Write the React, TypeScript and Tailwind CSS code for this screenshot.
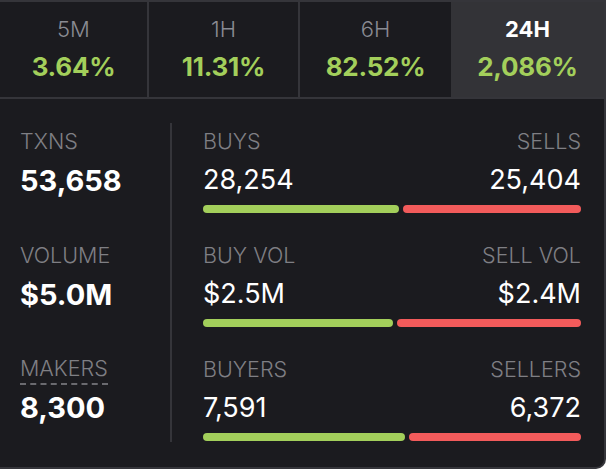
const tabs = [
  { label: "5M", value: "3.64%" },
  { label: "1H", value: "11.31%" },
  { label: "6H", value: "82.52%" },
  { label: "24H", value: "2,086%", active: true },
];

const totals = [
  { label: "TXNS", value: "53,658" },
  { label: "VOLUME", value: "$5.0M" },
  { label: "MAKERS", value: "8,300", dashed: true },
];

const splits = [
  { left: "BUYS", right: "SELLS", leftValue: "28,254", rightValue: "25,404", buy: 28254, sell: 25404 },
  { left: "BUY VOL", right: "SELL VOL", leftValue: "$2.5M", rightValue: "$2.4M", buy: 2.5, sell: 2.4 },
  { left: "BUYERS", right: "SELLERS", leftValue: "7,591", rightValue: "6,372", buy: 7591, sell: 6372 },
];

export default function App() {
  return (
    <div className="flex h-[469px] w-[606px] flex-col overflow-hidden rounded-br-[10px] border-y-2 border-r-2 border-[#35353a] bg-[#1b1b1f] font-['Inter','Liberation_Sans',sans-serif]">
      <div className="grid h-[97px] grid-cols-[149px_151px_151px_1fr] border-b-2 border-[#35353a]">
        {tabs.map((tab, i) => (
          <div
            key={tab.label}
            className={`flex flex-col items-center pt-[11px] ${i < 2 ? "border-r-2 border-[#35353a]" : ""} ${tab.active ? "bg-[#333337]" : ""}`}
          >
            <p
              className={`text-[22px] leading-[32px] ${tab.active ? "font-bold text-white" : "font-light text-[#8a8b93]"}`}
            >
              {tab.label}
            </p>
            <p className="mt-[6px] text-[26px] font-bold leading-[32px] tracking-[-0.01em] text-[#a3cf5b]">
              {tab.value}
            </p>
          </div>
        ))}
      </div>

      <div className="flex pl-5 pt-6">
        <div className="mt-[2px] flex w-[150px] flex-col gap-[42px]">
          {totals.map((item) => (
            <div key={item.label} className="flex flex-col items-start">
              <p
                className={`text-[21.5px] font-light text-[#7f7f84] ${item.dashed ? "h-[32px] border-b-2 border-dashed border-[#6a6a6f] leading-[30px]" : "leading-[32px]"}`}
              >
                {item.label}
              </p>
              <p className={`${item.dashed ? "mt-[7px]" : "mt-2"} text-[29px] font-bold leading-[32px] text-white`}>
                {item.value}
              </p>
            </div>
          ))}
        </div>

        <div className="h-[319px] w-[2px] bg-[#35353a]" />

        <div className="mt-[2px] box-content flex w-[378px] flex-col gap-[26px] pl-[31px]">
          {splits.map((row) => {
            const buyShare = row.buy / (row.buy + row.sell);
            return (
              <div key={row.left} className="flex flex-col">
                <div className="flex justify-between text-[21.5px] font-light leading-[32px] text-[#7f7f84]">
                  <span>{row.left}</span>
                  <span>{row.right}</span>
                </div>
                <div className="mt-[7px] flex justify-between text-[27px] font-normal leading-[32px] text-white">
                  <span>{row.leftValue}</span>
                  <span>{row.rightValue}</span>
                </div>
                <div className="mt-[9px] flex h-2 gap-1">
                  <div
                    className="rounded-full bg-[#a3cf5b]"
                    style={{ width: `calc((100% - 6px) * ${buyShare})` }}
                  />
                  <div className="flex-1 rounded-full bg-[#f25b5b]" />
                </div>
              </div>
            );
          })}
        </div>
      </div>
    </div>
  );
}
